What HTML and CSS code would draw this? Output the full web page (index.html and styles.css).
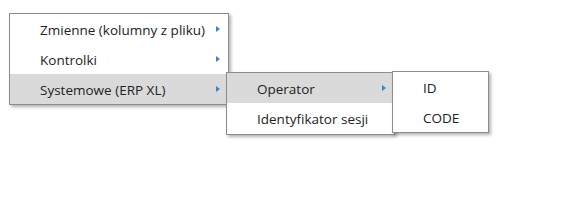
FILE: index.html
```html
<!DOCTYPE html>
<html lang="pl">

<head>
    <meta charset="UTF-8">
    <meta name="viewport" content="width=device-width, initial-scale=1.0">
    <title>Menu kontekstowe</title>
    <link rel="stylesheet" href="styles.css">
</head>

<body>
    <div class="page">
        <!-- Main context menu -->
        <div class="menu menu-main">
            <div class="item">
                <span class="label">Zmienne (kolumny z pliku)</span>
                <span class="arrow"></span>
            </div>
            <div class="item">
                <span class="label">Kontrolki</span>
                <span class="arrow"></span>
            </div>
            <div class="item active">
                <span class="label">Systemowe (ERP XL)</span>
                <span class="arrow"></span>

                <!-- Submenu: Systemowe -->
                <div class="menu submenu menu-system">
                    <div class="item active">
                        <span class="label">Operator</span>
                        <span class="arrow"></span>

                        <!-- Submenu: Operator -->
                        <div class="menu submenu menu-operator">
                            <div class="item"><span class="label">ID</span></div>
                            <div class="item"><span class="label">CODE</span></div>
                        </div>
                    </div>
                    <div class="item">
                        <span class="label">Identyfikator sesji</span>
                    </div>
                </div>
            </div>
        </div>
    </div>
</body>

</html>
```

FILE: styles.css
```css
/* Base styles */
body {
    font-family: "Open Sans", "Noto Sans", sans-serif;
    font-size: 13.5px;
    color: #222;
    background-color: #fff;
    margin: 0;
    padding: 0;
}

/* Page area (keeps the flyouts inside the document) */
.page {
    min-height: 214px;
    padding: 13px 0 0 9px;
    box-sizing: border-box;
}

/* Menu box */
.menu {
    background-color: #fff;
    border: 1px solid #8c8c8c;
    box-shadow: 2px 2px 3px rgba(0, 0, 0, 0.3);
    box-sizing: border-box;
}

.menu-main {
    width: 220px;
}

/* Menu rows */
.item {
    position: relative;
    display: flex;
    align-items: center;
    height: 30px;
    padding: 0 8px 0 30px;
    white-space: nowrap;
}

.label {
    padding-top: 2px;
}

.item.active {
    background-color: #dadada;
}

.arrow {
    margin-left: auto;
    width: 0;
    height: 0;
    border-top: 3.5px solid transparent;
    border-bottom: 3.5px solid transparent;
    border-left: 4px solid #3d82c8;
}

/* Flyout submenus */
.submenu {
    position: absolute;
    top: -2px;
    left: calc(100% - 2px);
    z-index: 1;
}

.menu-system {
    width: 169px;
    padding-bottom: 1px;
}

.menu-operator {
    width: 97px;
}
```
